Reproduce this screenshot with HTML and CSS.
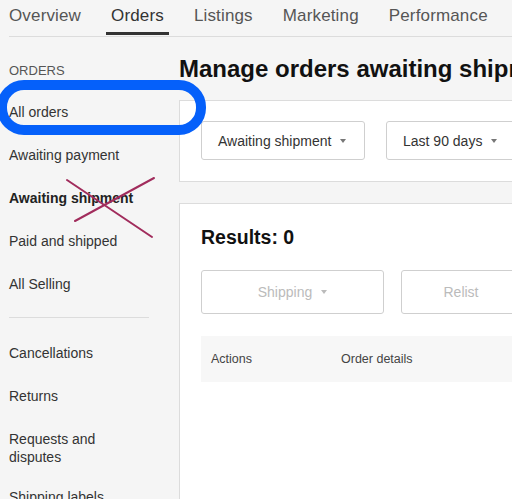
FILE: index.html
```html
<!DOCTYPE html>
<html lang="en">
<head>
<meta charset="utf-8">
<title>Orders</title>
<link rel="stylesheet" href="styles.css">
</head>
<body>
<div class="page">
  <nav class="tabs">
    <a class="tab">Overview</a>
    <a class="tab active">Orders</a>
    <a class="tab">Listings</a>
    <a class="tab">Marketing</a>
    <a class="tab">Performance</a>
  </nav>
  <div class="layout">
    <aside class="sidebar">
      <div class="side-title">ORDERS</div>
      <ul class="side-list">
        <li class="side-item">All orders</li>
        <li class="side-item">Awaiting payment</li>
        <li class="side-item current">Awaiting shipment</li>
        <li class="side-item">Paid and shipped</li>
        <li class="side-item">All Selling</li>
      </ul>
      <hr class="side-sep">
      <ul class="side-list">
        <li class="side-item">Cancellations</li>
        <li class="side-item">Returns</li>
        <li class="side-item multi">Requests and<br>disputes</li>
        <li class="side-item">Shipping labels</li>
      </ul>
    </aside>
    <main class="main">
      <h1 class="title">Manage orders awaiting shipment</h1>
      <section class="card filters">
        <button class="dropdown">Awaiting shipment <span class="caret"></span></button>
        <button class="dropdown">Last 90 days <span class="caret"></span></button>
      </section>
      <section class="card results">
        <h2 class="results-title">Results: 0</h2>
        <div class="actions">
          <button class="action-btn shipping">Shipping <span class="caret light"></span></button>
          <button class="action-btn relist">Relist</button>
        </div>
        <div class="table-head">
          <div class="col col-actions">Actions</div>
          <div class="col col-details">Order details</div>
        </div>
      </section>
    </main>
  </div>
</div>
<div class="mark-circle"></div>
<svg class="mark-cross" width="512" height="499" viewBox="0 0 512 499">
  <line x1="67" y1="180" x2="152" y2="237"/>
  <line x1="154" y1="178" x2="75" y2="221"/>
</svg>
</body>
</html>
```

FILE: styles.css
```css
html, body {
  margin: 0;
  padding: 0;
  overflow: hidden;
  background: #f5f5f5;
}
body {
  font-family: "Liberation Sans", Arial, sans-serif;
  color: #333;
  width: 512px;
  height: 499px;
  position: relative;
}
.page {
  width: 1000px;
}
.tabs {
  display: flex;
  gap: 20px;
  margin-left: 9px;
  height: 36px;
  border-bottom: 1px solid #dcdcdc;
}
.tab {
  display: block;
  font-size: 17px;
  line-height: 20px;
  letter-spacing: 0.15px;
  padding: 6px 5px 0;
  height: 26px;
  color: #555;
  border-bottom: 3px solid transparent;
}
.tab:first-child {
  margin-left: -5px;
}
.tab.active {
  color: #333;
  border-bottom-color: #333;
}
.layout {
  display: flex;
}
.sidebar {
  width: 179px;
  flex: none;
  padding-left: 9px;
  box-sizing: border-box;
}
.side-title {
  margin-top: 26px;
  font-size: 13px;
  line-height: 16px;
  color: #555;
}
.side-list {
  list-style: none;
  margin: 0;
  padding: 0;
}
.side-title + .side-list {
  margin-top: 12px;
}
.side-item {
  font-size: 14px;
  line-height: 19px;
  padding: 12px 0;
  color: #333;
}
.side-item.current {
  font-weight: bold;
  color: #222;
}
.side-item.multi {
  line-height: 18px;
  padding-bottom: 10px;
}
.side-sep {
  width: 140px;
  margin: 11px 0 14px;
  border: 0;
  border-top: 1px solid #dcdcdc;
  height: 0;
}
.main {
  flex: 1;
}
.title {
  margin: 19px 0 18px;
  font-size: 24px;
  line-height: 26px;
  font-weight: bold;
  color: #111;
  white-space: nowrap;
}
.card {
  background: #fff;
  border: 1px solid #dcdcdc;
  box-sizing: border-box;
}
.filters {
  display: flex;
  gap: 21px;
  padding: 20px 21px 21px;
}
.dropdown {
  display: flex;
  align-items: center;
  gap: 9px;
  height: 39px;
  width: 164px;
  padding: 0 16px;
  box-sizing: border-box;
  background: #fff;
  border: 1px solid #cfcfcf;
  border-radius: 3px;
  font-family: inherit;
  font-size: 14px;
  color: #333;
}
.caret {
  width: 0;
  height: 0;
  border-left: 3.5px solid transparent;
  border-right: 3.5px solid transparent;
  border-top: 4px solid #777;
}
.caret.light {
  border-top-color: #bbb;
}
.results {
  margin-top: 21px;
  padding: 21px 21px 200px;
}
.results-title {
  margin: 0;
  font-size: 19.5px;
  line-height: 24px;
  font-weight: bold;
  color: #111;
}
.actions {
  display: flex;
  gap: 17px;
  margin-top: 21px;
}
.action-btn {
  display: flex;
  align-items: center;
  justify-content: center;
  gap: 9px;
  height: 44px;
  box-sizing: border-box;
  background: #fff;
  border: 1px solid #cfcfcf;
  border-radius: 3px;
  font-family: inherit;
  font-size: 14px;
  color: #bbb;
}
.shipping {
  width: 183px;
}
.relist {
  width: 120px;
}
.table-head {
  display: flex;
  align-items: center;
  height: 46px;
  margin-top: 22px;
  padding-left: 10px;
  background: #f7f7f7;
  font-size: 12.5px;
  color: #444;
}
.col-actions {
  width: 130px;
}
.mark-circle {
  position: absolute;
  left: -3px;
  top: 80px;
  width: 209px;
  height: 55px;
  box-sizing: border-box;
  border: 10px solid #0560fa;
  border-radius: 27px;
}
.mark-cross {
  position: absolute;
  left: 0;
  top: 0;
  pointer-events: none;
}
.mark-cross line {
  stroke: #a12c5c;
  stroke-width: 2;
  stroke-linecap: round;
}
```
